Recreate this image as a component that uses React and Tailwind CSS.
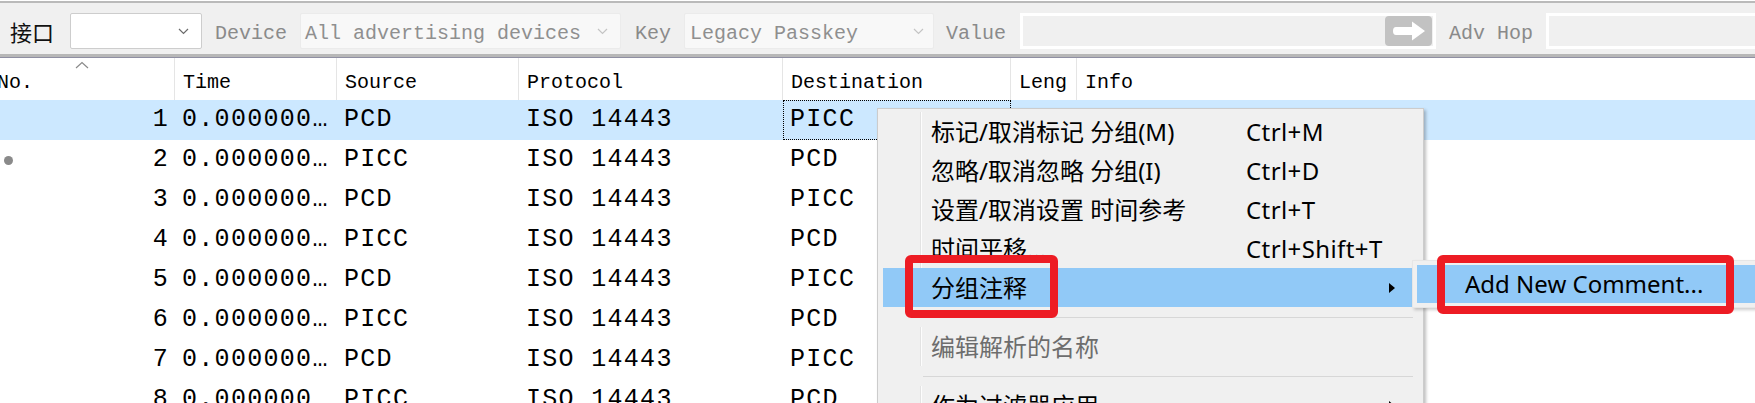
import React from 'react'

const rows = [
  [1, 'PCD', 'PICC'],
  [2, 'PICC', 'PCD'],
  [3, 'PCD', 'PICC'],
  [4, 'PICC', 'PCD'],
  [5, 'PCD', 'PICC'],
  [6, 'PICC', 'PCD'],
  [7, 'PCD', 'PICC'],
  [8, 'PICC', 'PCD'],
]

function Chevron({ color }) {
  return (
    <svg width="11" height="7" viewBox="0 0 11 7" className="shrink-0">
      <polyline points="1,1 5.5,5.5 10,1" fill="none" stroke={color} strokeWidth="1.2" />
    </svg>
  )
}

function Arrow() {
  return (
    <svg width="6" height="10" viewBox="0 0 6 10">
      <polygon points="0,0 6,5 0,10" fill="#000" />
    </svg>
  )
}

function MenuItem({ label, shortcut, active, disabled, arrow }) {
  return (
    <div className={`flex h-[39px] items-center ${active ? 'bg-[#91c9f7]' : ''}`}>
      <div className="h-full w-[37px] shrink-0" />
      <div className={`h-full w-[1px] shrink-0 ${active ? '' : 'bg-[#e3e3e3]'}`} />
      <div className={`h-full w-[1px] shrink-0 ${active ? '' : 'bg-[#fdfdfd]'}`} />
      <span className={`ml-[9px] w-[315px] shrink-0 whitespace-nowrap ${disabled ? 'text-[#6d6d6d]' : ''}`}>{label}</span>
      <span className="whitespace-nowrap tracking-[0.4px]">{shortcut}</span>
      {arrow && (
        <span className="ml-auto mr-[18px] flex">
          <Arrow />
        </span>
      )}
    </div>
  )
}

function Separator() {
  return (
    <div className="flex h-[20px] items-center pl-[40px]">
      <div className="h-[1px] w-full bg-[#d7d7d7]" />
    </div>
  )
}

export default function App() {
  return (
    <div className="relative h-[403px] w-[1755px] overflow-hidden bg-white">
      {/* toolbar */}
      <div className="mt-[1px] border-t-2 border-[#bababa] bg-[#f0f0f0]">
        <div className="flex h-[51px] items-start overflow-hidden whitespace-nowrap pl-[10px] pt-[10px] font-['Liberation_Mono',monospace] text-[20px] text-[#8a8a8a]">
          <span className="flex h-[36px] items-center font-['Noto_Sans_CJK_SC',sans-serif] text-[22px] text-[#111]">接口</span>
          <div className="ml-[16px] flex h-[36px] w-[132px] shrink-0 items-center justify-end rounded-[2px] border border-[#cdcdcd] bg-white pr-[12px]">
            <Chevron color="#6b6b6b" />
          </div>
          <span className="ml-[13px] flex h-[36px] items-center pt-[6px]">Device</span>
          <div className="ml-[13px] flex h-[36px] w-[321px] shrink-0 items-center justify-between rounded-[2px] border border-[#ebebeb] bg-[#f8f8f8] pl-[4px] pr-[12px] text-[#8f8f8f]">
            <span className="pt-[6px]">All advertising devices</span>
            <Chevron color="#c4c4c4" />
          </div>
          <span className="ml-[14px] flex h-[36px] items-center pt-[6px]">Key</span>
          <div className="ml-[13px] flex h-[36px] w-[250px] shrink-0 items-center justify-between rounded-[2px] border border-[#ebebeb] bg-[#f8f8f8] pl-[5px] pr-[9px] text-[#8f8f8f]">
            <span className="pt-[6px]">Legacy Passkey</span>
            <Chevron color="#c4c4c4" />
          </div>
          <span className="ml-[12px] flex h-[36px] items-center pt-[6px]">Value</span>
          <div className="ml-[14px] flex h-[36px] w-[416px] shrink-0 items-center justify-end border-[3px] border-white bg-[#f0f0f0] pr-[1px]">
            <div className="flex h-[30px] w-[47px] items-center justify-center rounded-[4px] bg-[#c2c2c2]">
              <svg width="47" height="30" viewBox="0 0 47 30">
                <path d="M11 11 H27 V5.5 L40 15 L27 24.5 V19 H11 Q8 19 8 15 Q8 11 11 11 Z" fill="#fff" />
              </svg>
            </div>
          </div>
          <span className="ml-[13px] flex h-[36px] items-center pt-[6px]">Adv Hop</span>
          <div className="ml-[13px] h-[36px] w-[300px] shrink-0 border-[3px] border-white bg-[#f0f0f0]" />
        </div>
        <div className="h-[3px] bg-[#b7b7b7]" />
        <div className="h-[1px] bg-[#8f8fa3]" />
      </div>

      {/* header */}
      <div className="flex h-[42px] whitespace-nowrap font-['Liberation_Mono',monospace] text-[20px] text-black">
        <div className="relative flex w-[175px] shrink-0 items-center border-r border-[#e5e5e5] pt-[8px]">
          <span className="-ml-[3px]">No.</span>
          <svg width="14" height="8" viewBox="0 0 14 8" className="absolute left-[75px] top-[3px]">
            <polyline points="1,7 7,1.5 13,7" fill="none" stroke="#8a8a8a" strokeWidth="1.2" />
          </svg>
        </div>
        <div className="flex w-[162px] shrink-0 items-center border-r border-[#e5e5e5] pl-[8px] pt-[8px]">Time</div>
        <div className="flex w-[182px] shrink-0 items-center border-r border-[#e5e5e5] pl-[8px] pt-[8px]">Source</div>
        <div className="flex w-[264px] shrink-0 items-center border-r border-[#e5e5e5] pl-[8px] pt-[8px]">Protocol</div>
        <div className="flex w-[228px] shrink-0 items-center border-r border-[#e5e5e5] pl-[8px] pt-[8px]">Destination</div>
        <div className="flex w-[66px] shrink-0 items-center overflow-hidden border-r border-[#e5e5e5] pl-[8px] pt-[8px]">Leng</div>
        <div className="flex flex-1 items-center pl-[8px] pt-[8px]">Info</div>
      </div>

      {/* packet rows */}
      <div className="whitespace-nowrap font-['Liberation_Mono',monospace] text-[25px] tracking-[1.3px] text-black">
        {rows.map(([no, src, dst], i) => (
          <div key={no} className={`flex h-[40px] items-center ${i === 0 ? 'bg-[#cce8ff]' : ''}`}>
            <div className="flex h-full w-[175px] shrink-0 items-center justify-between pl-[4px] pr-[6px]">
              {no === 2 ? <span className="h-[9px] w-[9px] rounded-full bg-[#8a8a8a]" /> : <span />}
              <span>{no}</span>
            </div>
            <div className="w-[162px] shrink-0 pl-[7px]">0.000000…</div>
            <div className="w-[182px] shrink-0 pl-[7px]">{src}</div>
            <div className="w-[264px] shrink-0 pl-[7px]">ISO 14443</div>
            <div
              className={`flex h-full w-[228px] shrink-0 items-center ${
                i === 0 ? 'border border-dotted border-black pl-[6px]' : 'pl-[7px]'
              }`}
            >
              {dst}
            </div>
            <div className="w-[66px] shrink-0" />
            <div className="flex-1" />
          </div>
        ))}
      </div>

      {/* context menu */}
      <div className="absolute left-[877px] top-[108px] w-[547px] border border-[#cccccc] bg-[#f0f0f0] pb-[4px] pl-[5px] pr-[10px] pt-[3px] font-['Noto_Sans','Noto_Sans_CJK_SC',sans-serif] text-[24px] text-black shadow-[2px_2px_3px_rgba(0,0,0,0.25)]">
        <MenuItem label="标记/取消标记 分组(M)" shortcut="Ctrl+M" />
        <MenuItem label="忽略/取消忽略 分组(I)" shortcut="Ctrl+D" />
        <MenuItem label="设置/取消设置 时间参考" shortcut="Ctrl+T" />
        <MenuItem label="时间平移..." shortcut="Ctrl+Shift+T" />
        <MenuItem label="分组注释" active arrow />
        <Separator />
        <MenuItem label="编辑解析的名称" disabled />
        <Separator />
        <MenuItem label="作为过滤器应用" arrow />
      </div>

      {/* submenu */}
      <div className="absolute left-[1412px] top-[260px] w-[400px] border border-[#e6e6e6] bg-[#f0f0f0] p-[4px] font-['Noto_Sans','Noto_Sans_CJK_SC',sans-serif] text-[24px] text-black shadow-[2px_2px_3px_rgba(0,0,0,0.2)]">
        <div className="flex h-[38px] items-center whitespace-nowrap bg-[#91c9f7] pl-[48px]">Add New Comment...</div>
      </div>

      {/* annotation boxes */}
      <div className="absolute left-[905px] top-[255px] h-[63px] w-[153px] rounded-[6px] border-[8px] border-[#ed1c24]" />
      <div className="absolute left-[1437px] top-[255px] h-[59px] w-[297px] rounded-[6px] border-[8px] border-[#ed1c24]" />
    </div>
  )
}
